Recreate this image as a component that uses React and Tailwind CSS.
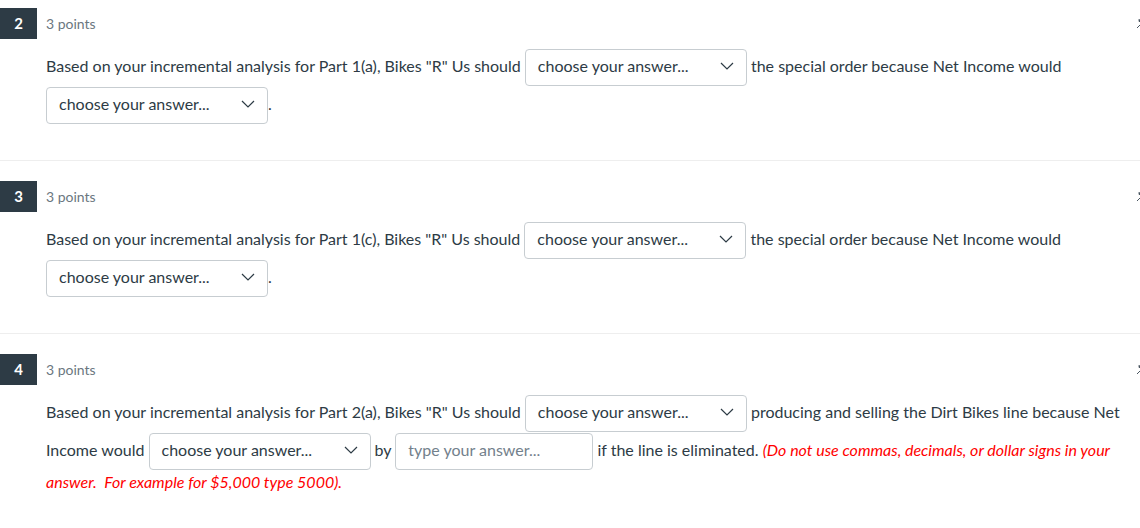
import React from "react";

const font = { fontFamily: "Lato, 'Open Sans', sans-serif" };

function Chevron() {
  return (
    <svg width="14" height="8" viewBox="0 0 14 8" className="shrink-0">
      <path d="M1 1 L7 7 L13 1" fill="none" stroke="#2d3b45" strokeWidth="1.2" />
    </svg>
  );
}

function Select() {
  return (
    <span className="inline-flex w-[222px] h-[37px] my-[0.5px] items-center justify-between align-baseline rounded-[4px] border border-[#c7cdd1] bg-white pl-[12px] pr-[12px] pb-[3px] text-[16px] text-[#2d3b45]">
      <span>choose your answer...</span>
      <Chevron />
    </span>
  );
}

function Input() {
  return (
    <span className="inline-flex w-[198px] h-[37px] items-center align-baseline rounded-[4px] border border-[#c7cdd1] bg-white pl-[12px] pb-[3px] text-[16px] text-[#73818c]">
      <span>type your answer...</span>
    </span>
  );
}

function Header({ n }) {
  return (
    <div className="relative flex items-center h-[31px]">
      <div className="w-[37px] h-[31px] bg-[#2d3b45] text-white font-bold text-[15px] flex items-center justify-center">
        {n}
      </div>
      <div className="ml-[9px] text-[14px] text-[#6b7780]">3 points</div>
      <svg className="absolute left-[1134px] top-[9px]" width="8" height="14" viewBox="0 0 8 14">
        <path d="M4.5 3 L5.5 3 L5.5 5" fill="none" stroke="#4a5660" strokeWidth="1.4" />
        <path d="M3 11 L6 8" fill="none" stroke="#4a5660" strokeWidth="1" />
      </svg>
    </div>
  );
}

function Block({ n, first, children }) {
  return (
    <div className={`${first ? "pt-[8px]" : "pt-[20px]"} pb-[36px] border-b border-[#eeeeee]`}>
      <Header n={n} />
      <div className="pl-[46px] pr-[16px] mt-[9px] text-[16px] leading-[24px] text-[#2d3b45]">
        {children}
      </div>
    </div>
  );
}

export default function App() {
  return (
    <div className="w-[1140px] h-[528px] overflow-hidden bg-white" style={font}>
      <Block n={2} first>
        Based on your incremental analysis for Part 1(a), Bikes "R" Us should <Select /> the special order because Net Income would <Select />.
      </Block>
      <Block n={3}>
        Based on your incremental analysis for Part 1(c), Bikes "R" Us should <Select /> the special order because Net Income would <Select />.
      </Block>
      <Block n={4}>
        Based on your incremental analysis for Part 2(a), Bikes "R" Us should <Select /> producing and selling the Dirt Bikes line because Net Income would <Select /> by <Input /> if the line is eliminated.{" "}
        <em className="text-[#ff0000]">(Do not use commas, decimals, or dollar signs in your answer.&nbsp; For example for $5,000 type 5000).</em>
      </Block>
    </div>
  );
}
